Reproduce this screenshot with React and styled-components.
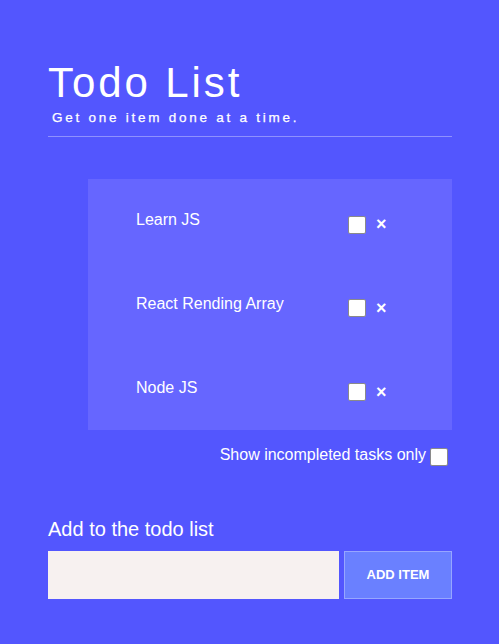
import React, { useState } from "react";
import styled, { createGlobalStyle } from "styled-components";

const GlobalStyle = createGlobalStyle`
  html, body {
    margin: 0;
    padding: 0;
    background: #5356fe;
    font-family: "Liberation Sans", Arial, sans-serif;
    color: #ffffff;
  }
`;

const Page = styled.div`
  width: 404px;
  margin-left: 48px;
  padding-top: 62px;
  padding-bottom: 44px;
`;

const Title = styled.h1`
  margin: 0;
  font-size: 42px;
  line-height: 42px;
  font-weight: 400;
  letter-spacing: 2.9px;
`;

const Subtitle = styled.p`
  margin: 7px 0 0 4px;
  font-size: 13.5px;
  line-height: 13px;
  font-weight: 400;
  letter-spacing: 2.75px;
  -webkit-text-stroke: 0.25px #ffffff;
`;

const Divider = styled.hr`
  margin: 12px 0 0;
  border: none;
  border-top: 1px solid rgba(255, 255, 255, 0.35);
`;

const Panel = styled.ul`
  list-style: none;
  margin: 42px 0 0 40px;
  padding: 0 0 0 48px;
  background: #6666ff;
`;

const Row = styled.li`
  display: grid;
  grid-template-columns: 212px auto auto;
  justify-content: start;
  align-items: center;
  height: 83.67px;
`;

const Label = styled.span`
  font-size: 16px;
  margin-top: -1px;
`;

const Box = styled.input.attrs({ type: "checkbox" })`
  appearance: none;
  margin: ${(p) => p.$offset || "0"};
  width: 18px;
  height: 18px;
  background: #ffffff;
  border: 1px solid #8a8a8a;
  border-radius: 2px;
  box-sizing: border-box;
  &:checked {
    background: #dfe3ff;
  }
`;

const Remove = styled.button`
  margin: 7px 0 0 10px;
  padding: 0;
  border: none;
  background: none;
  color: #ffffff;
  font-family: "Liberation Sans", Arial, sans-serif;
  font-size: 18px;
  font-weight: 700;
  line-height: 1;
`;

const Filter = styled.label`
  display: flex;
  justify-content: flex-end;
  align-items: flex-end;
  gap: 4px;
  margin-top: 16px;
  font-size: 16px;
`;

const AddHeading = styled.h2`
  margin: 54px 0 0;
  font-size: 20px;
  line-height: 22px;
  font-weight: 400;
`;

const Form = styled.form`
  display: flex;
  gap: 5px;
  margin-top: 11px;
`;

const TextInput = styled.input`
  flex: 1;
  height: 48px;
  box-sizing: border-box;
  border: none;
  background: #f7f1f0;
  padding: 0 12px;
  font-size: 16px;
  outline: none;
`;

const AddButton = styled.button`
  width: 108px;
  height: 48px;
  box-sizing: border-box;
  background: #6a80ff;
  border: 1px solid rgba(255, 255, 255, 0.3);
  color: #ffffff;
  font-family: "Liberation Sans", Arial, sans-serif;
  font-size: 13px;
  font-weight: 700;
  cursor: pointer;
`;

const initial = [
  { id: 1, text: "Learn JS", done: false },
  { id: 2, text: "React Rending Array", done: false },
  { id: 3, text: "Node JS", done: false },
];

export default function App() {
  const [todos, setTodos] = useState(initial);
  const [onlyOpen, setOnlyOpen] = useState(false);
  const [draft, setDraft] = useState("");

  const shown = onlyOpen ? todos.filter((t) => !t.done) : todos;

  const add = (e) => {
    e.preventDefault();
    if (!draft.trim()) return;
    setTodos([...todos, { id: Date.now(), text: draft, done: false }]);
    setDraft("");
  };

  return (
    <>
      <GlobalStyle />
      <Page>
        <Title>Todo List</Title>
        <Subtitle>Get one item done at a time.</Subtitle>
        <Divider />
        <Panel>
          {shown.map((t) => (
            <Row key={t.id}>
              <Label>{t.text}</Label>
              <Box
                $offset="8px 0 0 0"
                checked={t.done}
                onChange={() =>
                  setTodos(todos.map((x) => (x.id === t.id ? { ...x, done: !x.done } : x)))
                }
              />
              <Remove onClick={() => setTodos(todos.filter((x) => x.id !== t.id))}>×</Remove>
            </Row>
          ))}
        </Panel>
        <Filter>
          Show incompleted tasks only
          <Box $offset="0 4px -2px 0" checked={onlyOpen} onChange={() => setOnlyOpen(!onlyOpen)} />
        </Filter>
        <AddHeading>Add to the todo list</AddHeading>
        <Form onSubmit={add}>
          <TextInput value={draft} onChange={(e) => setDraft(e.target.value)} />
          <AddButton type="submit">ADD ITEM</AddButton>
        </Form>
      </Page>
    </>
  );
}
